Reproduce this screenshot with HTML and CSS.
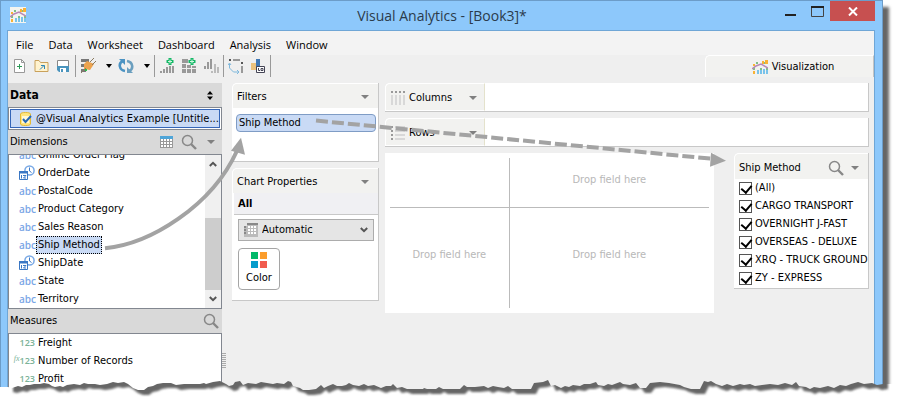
FILE: index.html
```html
<!DOCTYPE html>
<html lang="en">
<head>
  <meta charset="UTF-8">
  <meta name="viewport" content="width=device-width, initial-scale=1.0">
  <title>Visual Analytics - [Book3]*</title>
  <link rel="stylesheet" href="styles.css">
</head>
<body>

<!-- shared icons -->
<svg class="defs" aria-hidden="true">
  <symbol id="i-chart" viewBox="0 0 16 16">
    <path fill="#79c3ea" d="M5 11h2v4H5zM8 9h2v6H8zM11 10h2v5h-2zM14 11h2v4h-2z"/>
    <path fill="#7fbf87" d="M1 8h2v3H1zM4 3h2v2H4zM8 9h2v2H8zM11 3h2v2h-2zM14 9h2v2h-2z"/>
    <path fill="#f9b233" d="M1 12h2v3H1zM1 5h2v2H1zM10 2h2v3h-2zM13 1h3v4h-3z"/>
    <path fill="none" stroke="#b889b5" stroke-width="1.5" d="M0 10l4-3 5-2 7 4"/>
  </symbol>
  <symbol id="i-search" viewBox="0 0 16 16">
    <circle cx="6.5" cy="6.5" r="5" fill="none" stroke="#888" stroke-width="1.5"/>
    <path d="M10 10l5 5" stroke="#888" stroke-width="2.4" fill="none"/>
  </symbol>
  <symbol id="i-date" viewBox="0 0 16 16">
    <circle cx="10.500" cy="5.500" r="4.600" fill="#fff" stroke="#79a9e6" stroke-width="1.5"/>
    <path d="M10.500 2.500v3.500l2 1.500" stroke="#3a77c4" fill="none"/>
    <path d="M.5 6.500h8v8h-8z" fill="#fff" stroke="#3a77c4"/>
    <path d="M0 6h9v2.500H0z" fill="#3a77c4"/>
    <path d="M2.500 10v3.500M4 10.500h3L4.500 13H7" stroke="#3a77c4" fill="none"/>
  </symbol>
  <symbol id="i-chev" viewBox="0 0 8 6">
    <path d="M.8 1L4 4.200 7.200 1" stroke="#555" stroke-width="2" fill="none"/>
  </symbol>
</svg>

<div class="page">
  <div class="window">

    <header class="titlebar">
      <svg class="app-icon" viewBox="0 0 16 16"><rect width="16" height="16" fill="#f4f4f0"/><use href="#i-chart"/></svg>
      <h1>Visual Analytics - [Book3]*</h1>
      <div class="winbtns">
        <button class="min" aria-label="Minimize"><svg width="12" height="12"><path d="M0 10h11" stroke="#222" stroke-width="2"/></svg></button>
        <button class="max" aria-label="Maximize"><svg width="13" height="12"><path d="M.5 1.500h12v10H.5z" fill="none" stroke="#444"/><path d="M0 1h13v2H0z" fill="#222"/></svg></button>
        <button class="close" aria-label="Close"><svg width="10" height="9"><path d="M1 .5l8 8M9 .5l-8 8" stroke="#fff" stroke-width="2"/></svg></button>
      </div>
    </header>

    <div class="client">
      <nav class="menu">
        <button>File</button>
        <button>Data</button>
        <button>Worksheet</button>
        <button>Dashboard</button>
        <button>Analysis</button>
        <button>Window</button>
      </nav>

      <div class="bar">
        <div class="toolbar">
          <button aria-label="New"><svg width="14" height="16" viewBox="0 0 14 16"><path d="M2.500 1.500h7l3 3v10h-10z" fill="#fff" stroke="#999"/><path d="M9.500 1.500v3h3" fill="none" stroke="#999"/><path d="M7.500 6v5M5 8.500h5" stroke="#2e9b57"/></svg></button>
          <button aria-label="Open"><svg width="15" height="16" viewBox="0 0 15 16"><path d="M1 2.500h4l1.500 2H14v9H1z" fill="#fff3cf" stroke="#c9a15b"/><path d="M6 11.500l4-4M7 7.500h3.500V11" stroke="#2e86b8" fill="none"/></svg></button>
          <button aria-label="Save"><svg width="14" height="16" viewBox="0 0 14 16"><path d="M1.500 2.500h11v6h-11z" fill="#fff" stroke="#888"/><path d="M1 8h12v6H3l-2-2z" fill="#4a94bd"/><path d="M4 10h6v4H4z" fill="#fff"/><path d="M5 11h2v3H5z" fill="#4a94bd"/></svg></button>
          <i class="sep"></i>
          <button class="wide" aria-label="Connection"><svg width="16" height="16" viewBox="0 0 16 16"><path d="M1 1h8v3H1zM1 6h6v3H1zM1 11h5v3H1z" fill="#777"/><path d="M4 6l3-3 7 3-4 6-6-1z" fill="#eca34f"/><path d="M10 4l4-4M12 7l4-4M6 10l-5 5" stroke="#8a7a60" fill="none"/><path d="M5 11h2v2H5z" fill="#2fbf4a"/></svg><i class="arrow"></i></button>
          <button class="wide" aria-label="Refresh"><svg width="16" height="16" viewBox="0 0 16 16"><path d="M7 13C1 12 0 5 5 3" stroke="#4b93c3" stroke-width="2.600" fill="none"/><path d="M1 1h6v6z" fill="#4b93c3"/><path d="M9 3c6 1 7 8 2 10" stroke="#6b9fbf" stroke-width="2.600" fill="none"/><path d="M15 15H9V9z" fill="#6b9fbf"/></svg><i class="arrow"></i></button>
          <i class="sep"></i>
          <button aria-label="Add worksheet"><svg width="16" height="16" viewBox="0 0 16 16"><path d="M1 13h2v2H1zM4 11h2v4H4zM7 9h2v6H7zM10 8h2v7h-2zM13 8h2v7h-2z" fill="#999"/><path d="M11 0v7M7.500 3.500h7" stroke="#14b866" stroke-width="3"/><path d="M11 1.500v4M9 3.500h4" stroke="#d4f5e2"/></svg></button>
          <button aria-label="Add dashboard"><svg width="16" height="16" viewBox="0 0 16 16"><path d="M1 1h6v4H1zM1 6h4v4H1zM6 7h4v3H6zM11 8h4v2h-4zM1 11h4v4H1zM6 11h4v4H6zM11 11h4v4h-4z" fill="#999"/><path d="M11 0v7M7.500 3.500h7" stroke="#14b866" stroke-width="3"/><path d="M11 1.500v4M9 3.500h4" stroke="#d4f5e2"/></svg></button>
          <button aria-label="Duplicate"><svg width="16" height="16" viewBox="0 0 16 16"><path d="M1 8h2v3H1zM4 4h2v7H4zM7 1h2v10H7z" fill="#999"/><path d="M8 13h2v2H8zM11 6h2v9h-2zM14 9h2v6h-2z" fill="#bbb"/></svg></button>
          <i class="sep"></i>
          <button aria-label="Swap"><svg width="16" height="16" viewBox="0 0 16 16"><path d="M1 1h2v2H1zM13 4h2v2h-2z" fill="#555"/><path d="M5 1h7v2H5zM13 8h2v7h-2z" fill="#999"/><path d="M1.500 6v4l4 4h5M0 7l1.500-2L3 7M9 12l2 2-2 2" stroke="#7fb8dc" fill="none"/></svg></button>
          <button aria-label="Labels"><svg width="16" height="16" viewBox="0 0 16 16"><path d="M1 5h5v7H1z" fill="#ecc27c"/><path d="M6 1h4v9H6z" fill="#4178b4"/><path d="M6.500 8.500h8v6h-8z" fill="#fff" stroke="#445"/><path d="M8.500 10v2.500H10M11 10.500h2v2h-2z" stroke="#445" fill="none"/></svg></button>
          <i class="sep"></i>
        </div>
        <button class="tab"><svg width="16" height="16"><use href="#i-chart"/></svg>Visualization</button>
      </div>

      <div class="workspace">
        <aside class="side">
          <div class="side-head data-head"><b>Data</b><svg width="6" height="9"><path d="M0 3.500L3 0l3 3.500zM0 5.500h6L3 9z"/></svg></div>
          <div class="source"><button>
            <svg width="12" height="14" viewBox="0 0 12 14"><path d="M.5 2c0-2 10-2 10 0v10c0 2-10 2-10 0z" fill="#ffe680" stroke="#e5b932"/><path d="M2 4h7v7H2z" fill="#fff8d8"/><path d="M3 7l2.500 3L11 4" stroke="#2869b5" stroke-width="2" fill="none"/></svg>
            <span>@Visual Analytics Example [Untitle...</span></button></div>

          <div class="side-head"><span>Dimensions</span>
            <svg width="13" height="12" viewBox="0 0 13 12"><path d="M0 0h13v12H0z" fill="#999"/><path d="M0 0h13v3H0z" fill="#4fa5d8"/><path d="M1 3h2v2H1zM4 3h2v2H4zM7 3h2v2H7zM10 3h2v2h-2zM1 6h2v2H1zM4 6h2v2H4zM7 6h2v2H7zM10 6h2v2h-2zM1 9h2v2H1zM4 9h2v2H4zM7 9h2v2H7zM10 9h2v2h-2z" fill="#fff"/></svg>
            <svg width="16" height="16"><use href="#i-search"/></svg>
            <i class="arrow gray"></i>
          </div>
          <div class="list dims">
            <ul>
              <li><i class="abc">abc</i><span>Online Order Flag</span></li>
              <li><svg width="16" height="16"><use href="#i-date"/></svg><span>OrderDate</span></li>
              <li><i class="abc">abc</i><span>PostalCode</span></li>
              <li><i class="abc">abc</i><span>Product Category</span></li>
              <li><i class="abc">abc</i><span>Sales Reason</span></li>
              <li><i class="abc">abc</i><span class="selected">Ship Method</span></li>
              <li><svg width="16" height="16"><use href="#i-date"/></svg><span>ShipDate</span></li>
              <li><i class="abc">abc</i><span>State</span></li>
              <li><i class="abc">abc</i><span>Territory</span></li>
            </ul>
            <div class="scroll">
              <svg class="up" width="8" height="6"><use href="#i-chev"/></svg>
              <div class="thumb"></div>
              <svg width="8" height="6"><use href="#i-chev"/></svg>
            </div>
          </div>

          <div class="side-head"><span>Measures</span><svg width="16" height="16"><use href="#i-search"/></svg></div>
          <div class="list">
            <ul>
              <li><i class="num">123</i><span>Freight</span></li>
              <li><i class="num"><em>fx</em>123</i><span>Number of Records</span></li>
              <li><i class="num">123</i><span>Profit</span></li>
            </ul>
          </div>
        </aside>

        <div class="splitter"><i></i></div>

        <div class="cards">
          <section class="card">
            <h2>Filters<i class="arrow gray"></i></h2>
            <div class="drop"><button class="pill">Ship Method</button></div>
          </section>
          <section class="card">
            <h2>Chart Properties<i class="arrow gray"></i></h2>
            <h3>All</h3>
            <div class="props">
              <div class="combo">
                <svg width="14" height="14" viewBox="0 0 14 14"><path d="M3 0h11v14H3zM0 3h3v11H0z" fill="#bbb"/><path d="M3 0h11v2H3zM0 3h2v2H0zM0 6h2v2H0zM0 9h2v2H0z" fill="#888"/><path d="M4 3h2v2H4zM7 3h2v2H7zM10 3h2v2h-2zM4 6h2v2H4zM7 6h2v2H7zM10 6h2v2h-2zM4 9h2v2H4zM7 9h2v2H7zM10 9h2v2h-2z" fill="#fff"/></svg>
                <select aria-label="Chart type"><option>Automatic</option></select>
                <svg width="8" height="6"><use href="#i-chev"/></svg>
              </div>
              <button class="color"><svg width="16" height="16"><path fill="#00b96b" d="M0 0h7v7H0z"/><path fill="#fb9d2c" d="M9 0h7v7H9z"/><path fill="#069ccb" d="M0 9h7v7H0z"/><path fill="#f15b4e" d="M9 9h7v7H9z"/></svg>Color</button>
            </div>
          </section>
        </div>

        <main class="sheet">
          <div class="shelf"><div class="label"><svg width="14" height="14"><path d="M0 0h2v2H0zM4 0h2v2H4zM8 0h2v2H8zM12 0h2v2h-2z" fill="#999"/><path d="M0 4h2v10H0zM4 4h2v10H4zM8 4h2v10H8zM12 4h2v10h-2z" fill="#d8d8d8"/></svg>Columns<i class="arrow gray"></i></div></div>
          <div class="shelf"><div class="label"><svg width="14" height="14"><path d="M0 0h2v2H0zM0 4h2v2H0zM0 8h2v2H0zM0 12h2v2H0z" fill="#999"/><path d="M4 0h10v2H4zM4 4h10v2H4zM4 8h10v2H4zM4 12h10v2H4z" fill="#d8d8d8"/></svg>Rows<i class="arrow gray"></i></div></div>
          <div class="view">
            <div class="canvas">
              <div></div>
              <div>Drop field here</div>
              <div>Drop field here</div>
              <div>Drop field here</div>
            </div>
            <section class="card quick">
              <h2>Ship Method<svg width="16" height="16"><use href="#i-search"/></svg><i class="arrow gray"></i></h2>
              <label><input type="checkbox" checked>(All)</label>
              <label><input type="checkbox" checked>CARGO TRANSPORT</label>
              <label><input type="checkbox" checked>OVERNIGHT J-FAST</label>
              <label><input type="checkbox" checked>OVERSEAS - DELUXE</label>
              <label><input type="checkbox" checked>XRQ - TRUCK GROUND</label>
              <label><input type="checkbox" checked>ZY - EXPRESS</label>
            </section>
          </div>
        </main>
      </div>
    </div>
  </div>

  <!-- drag arrows -->
  <svg class="arrows" viewBox="0 0 899 402" preserveAspectRatio="none" aria-hidden="true">
    <path d="M105 247C150 243 212 205 237 150" stroke="#a3a3a3" stroke-width="4" fill="none"/>
    <path d="M241 137l-10 13 14 4z" fill="#a3a3a3"/>
    <path d="M316 120L712 158" stroke="#a3a3a3" stroke-width="4" stroke-dasharray="12 4" fill="none"/>
    <path d="M726 160l-15-8-1 14z" fill="#a3a3a3"/>
  </svg>

  <!-- torn bottom edge -->
  <svg class="torn" viewBox="0 376 899 26" preserveAspectRatio="none" aria-hidden="true">
    <defs>
      <path id="edge" d="M8 340L8 385 12 386 18 384 22 385 26 383 30 383 34 382 40 382 44 381 49 382 52 384 55 385 60 384 63 385 67 383 74 382 80 383 84 381 88 382 95 382 100 383 107 382 113 380 118 381 124 380 128 382 133 386 138 388 144 388 148 385 153 384 157 382 163 381 171 381 176 383 184 382 200 382 204 381 206 382 213 380 220 379 226 382 229 384 233 383 235 380 240 379 243 383 248 381 256 382 261 380 267 381 273 382 277 381 284 382 288 379 291 380 293 384 300 386 303 388 309 388 316 387 321 383 324 386 328 384 333 382 337 384 342 384 346 383 349 381 353 383 359 384 364 382 368 384 374 383 381 386 386 384 391 384 393 382 397 386 402 385 407 387 423 387 424 386 427 387 436 387 439 385 443 387 460 387 464 383 467 385 475 385 484 384 488 386 493 384 498 385 504 386 508 384 512 387 531 387 534 381 543 380 548 378 551 384 555 383 561 386 565 384 569 385 573 383 580 384 584 382 590 382 596 380 598 383 604 384 608 382 612 383 620 380 623 382 630 383 636 381 640 386 646 386 650 381 660 380 669 381 680 383 684 385 691 387 700 387 704 379 708 380 711 379 716 382 722 384 727 382 733 384 740 382 744 383 750 382 755 384 762 383 770 382 778 383 785 381 792 383 796 380 799 384 806 385 810 387 814 385 820 386 828 384 834 386 840 383 846 384 851 382 858 380 864 382 872 381 877 383 883 382V340z"/>
      <filter id="soft" x="-5%" y="-20%" width="110%" height="140%"><feGaussianBlur stdDeviation="1.200"/></filter>
      <mask id="outside" maskUnits="userSpaceOnUse" x="0" y="370" width="899" height="40"><rect y="370" width="899" height="40" fill="#fff"/><path d="M0 340H8V385H0z"/><use href="#edge"/><path d="M883 340H899V382H883z"/></mask>
    </defs>
    <g mask="url(#outside)">
      <rect y="376" width="899" height="30" fill="#fff"/>
      <use href="#edge" class="torn-shadow" filter="url(#soft)"/>
    </g>
  </svg>
</div>

</body>
</html>
```
FILE: styles.css
```css
* {
  box-sizing: border-box;
}

body {
  margin: 0;
  background: #fff;
  color: #000;
  font: 11px/18px Tahoma, "DejaVu Sans Condensed", "DejaVu Sans", sans-serif;
}

button, select {
  font: inherit;
  color: inherit;
  background: none;
  border: 0;
  padding: 0;
  margin: 0;
}

h1, h2, h3, ul {
  margin: 0;
  padding: 0;
  font-size: inherit;
  font-weight: normal;
  list-style: none;
}

i, em { font-style: normal; }
svg { display: block; flex: none; }
.defs { position: absolute; width: 0; height: 0; }

.page {
  position: relative;
  padding: 0 16px 12px 0;
  overflow: hidden;
}

.window {
  background: #8dc8fb;
  border: 1px solid #6c9cc8;
  border-bottom: 0;
  padding: 0 7px 0 6px;
  box-shadow: 6px 7px 3px #666;
}

/* title bar */
.titlebar {
  display: flex;
  height: 29px;
}
.app-icon { width: 16px; height: 16px; margin: 6px 0 0 3px; }
.titlebar h1 {
  flex: 1;
  text-align: center;
  font: 14px/30px "Open Sans", sans-serif;
  color: #2b3b4b;
  padding-left: 80px;
}
.winbtns { display: flex; align-items: flex-start; }
.winbtns button {
  display: flex;
  align-items: center;
  justify-content: center;
  width: 26px;
  height: 20px;
}
.winbtns .close { width: 45px; background: #c75050; }

.client {
  border: 1px solid #6fa6d6;
  border-bottom: 0;
  background: #efefef;
}

.menu {
  display: flex;
  gap: 15px;
  padding: 3px 8px 0;
  height: 24px;
  background: #f3f3f3;
  font: 11px/20px "Open Sans", sans-serif;
}

/* toolbar and tab */
.bar {
  display: flex;
  justify-content: space-between;
  height: 28px;
}
.toolbar {
  display: flex;
  align-items: center;
  height: 22px;
  gap: 6px;
  padding-left: 3px;
}
.toolbar button {
  display: flex;
  align-items: center;
  justify-content: center;
  width: 16px;
}
.toolbar .wide { width: 32px; justify-content: space-between; }
.sep { width: 1px; height: 22px; background: #999; margin: 0 -2px; }

.arrow {
  border: 3px solid transparent;
  border-top: 4px solid #000;
  border-bottom: 0;
}
.arrow.gray { border-width: 4px 4px 0; border-top-color: #808080; }

.tab {
  display: flex;
  align-items: center;
  justify-content: center;
  gap: 4px;
  width: 169px;
  height: 22px;
  padding-left: 7px;
  background: #f2f2f0;
  border-top: 1px solid #fff;
  border-left: 1px solid #fff;
  border-right: 1px solid #c4c4c4;
  border-radius: 5px 0 0 0;
}

.workspace { display: flex; }

/* left pane */
.side { width: 214px; flex: none; }
.side-head {
  display: flex;
  align-items: center;
  gap: 8px;
  height: 24px;
  padding: 0 3px 0 2px;
  background: #d9d9d9;
}
.side-head > :first-child { flex: 1; }
.side-head .arrow { margin: 0 4px 0 2px; }
.data-head b { font-size: 12px; }
.data-head svg { margin-right: 6px; }

.source {
  border: 1px solid #828790;
  padding: 1px;
  background: #fff;
}
.source button {
  display: flex;
  align-items: center;
  gap: 4px;
  width: 100%;
  height: 19px;
  padding-left: 9px;
  background: #c9daf5;
  border: 1px solid #3566b8;
  white-space: nowrap;
}

.list {
  display: flex;
  background: #fff;
  border: 1px solid #828790;
}
.list:last-child { border-bottom: 0; padding-bottom: 4px; }
.dims { height: 155px; }
.list ul {
  flex: 1;
  display: flex;
  flex-direction: column;
  justify-content: flex-end;
  padding-left: 10px;
  overflow: hidden;
}
.list li {
  display: flex;
  align-items: center;
  gap: 1px;
  height: 18px;
  flex: none;
}
.list li span { padding: 0 1px; line-height: 16px; border: 1px dotted transparent; }
.list li .selected { background: #c9daf5; border-color: #000; }
.abc, .num {
  width: 16px;
  font: 600 10px/16px "Open Sans", sans-serif;
  color: #7ba6e6;
}
.num {
  display: flex;
  justify-content: flex-end;
  font-size: 9px;
  color: #7bb398;
}
.num em { font: italic 8px/12px "Liberation Serif", serif; }

.scroll {
  display: flex;
  flex-direction: column;
  align-items: center;
  width: 16px;
  padding: 6px 0;
  background: #f0f0f0;
}
.scroll .up { transform: rotate(180deg); margin-bottom: auto; }
.thumb { width: 100%; height: 72px; background: #cdcdcd; margin-bottom: 6px; }

.splitter { width: 10px; flex: none; }
.splitter i {
  display: block;
  width: 4px;
  height: 15px;
  margin-top: 270px;
  background: repeating-linear-gradient(#aaa 0 1px, #efefef 1px 2px);
}

/* cards */
.cards {
  display: flex;
  flex-direction: column;
  gap: 6px;
  width: 147px;
  margin-right: 1px;
  flex: none;
}
.card {
  background: #fff;
  border-right: 1px solid #c8c8c8;
  border-bottom: 1px solid #c8c8c8;
  border-radius: 5px 0 0 0;
  overflow: hidden;
}
.card h2 {
  display: flex;
  align-items: center;
  justify-content: space-between;
  height: 25px;
  padding: 2px 9px 0 4px;
  background: #f2f2f0;
  border-top: 1px solid #fff;
  border-left: 1px solid #fff;
  border-radius: 5px 0 0 0;
}
.drop { height: 53px; padding: 6px 2px 0 4px; }
.pill {
  display: block;
  width: 100%;
  height: 18px;
  padding-left: 2px;
  text-align: left;
  line-height: 16px;
  background: #c9daf5;
  border: 1px solid #7f9cc5;
  border-radius: 4px;
}
.card h3 {
  height: 22px;
  margin-left: 2px;
  padding-left: 4px;
  line-height: 22px;
  font-size: 11px;
  font-weight: bold;
  background: #f0f0f3;
  border-bottom: 1px solid #c8c8c8;
}
.props { padding: 4px 4px 10px 6px; }
.combo {
  display: flex;
  align-items: center;
  height: 22px;
  padding: 0 5px;
  background: #e5e5e5;
  border: 1px solid #acacac;
}
.combo select { flex: 1; appearance: none; padding-left: 4px; }
.color {
  display: flex;
  flex-direction: column;
  align-items: center;
  width: 42px;
  height: 42px;
  margin-top: 7px;
  padding-top: 3px;
  background: #fff;
  border: 1px solid #a5a5a5;
  border-radius: 4px;
  line-height: 20px;
}

/* shelves and view */
.sheet {
  flex: 1;
  display: flex;
  flex-direction: column;
  gap: 6px;
  padding: 0 5px;
}
.shelf {
  height: 29px;
  background: #fff;
  border-right: 1px solid #c8c8c8;
  border-bottom: 1px solid #c8c8c8;
  border-radius: 5px 0 0 0;
}
.label {
  display: flex;
  align-items: center;
  gap: 4px;
  width: 100px;
  height: 28px;
  padding: 1px 7px 0 5px;
  background: #f2f2f0;
  border: 1px solid #fff;
  border-right-color: #e4e2cc;
  border-radius: 5px 0 0 0;
}
.label .arrow { margin-left: auto; }

.view { display: flex; gap: 20px; align-items: flex-start; }
.canvas {
  flex: 1;
  display: grid;
  grid-template-columns: 120fr 200fr;
  grid-template-rows: 50px 100px;
  padding: 5px;
  background: #fff;
  color: #b8b8b8;
}
.canvas div {
  display: flex;
  align-items: center;
  justify-content: center;
  padding-bottom: 6px;
}
.canvas div:nth-child(odd) { border-right: 1px solid #bbb; }
.canvas div:nth-child(-n+2) { border-bottom: 1px solid #bbb; }

.quick { width: 135px; flex: none; padding-bottom: 1px; }
.quick h2 { gap: 7px; height: 26px; }
.quick h2 svg { margin-left: auto; }
.quick label {
  display: flex;
  align-items: center;
  gap: 3px;
  height: 18px;
  padding-left: 5px;
  white-space: nowrap;
}
.quick input {
  appearance: none;
  flex: none;
  width: 13px;
  height: 13px;
  margin: 0;
  border: 1px solid #555;
  background: #fff;
}
.quick input:checked::after {
  content: "";
  display: block;
  width: 5px;
  height: 8px;
  margin: 0 0 0 3px;
  border: solid #000;
  border-width: 0 2px 2px 0;
  transform: rotate(40deg);
}

.arrows {
  position: absolute;
  top: 0;
  left: 0;
  width: 100%;
  height: 100%;
  pointer-events: none;
}
.torn {
  position: absolute;
  left: 0;
  bottom: 0;
  width: 100%;
  height: 26px;
}
.torn-shadow { fill: #666; transform: translate(5px, 5px); }
```
